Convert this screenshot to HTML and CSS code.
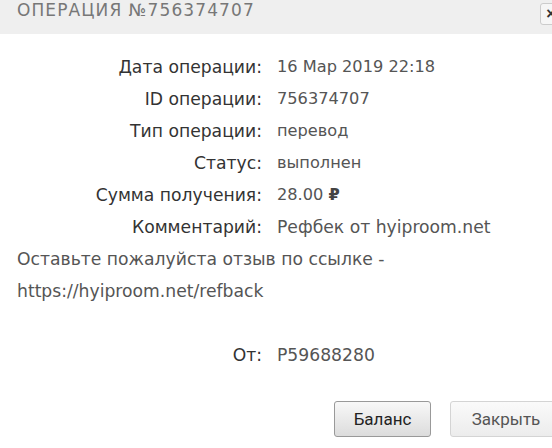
FILE: index.html
```html
<!DOCTYPE html>
<html lang="ru">
<head>
  <meta charset="UTF-8">
  <title>Операция №756374707</title>
  <link rel="stylesheet" href="styles.css">
</head>
<body>
  <div class="dialog">
    <div class="dialog-head">
      <span class="dialog-title">Операция №756374707</span>
      <button class="head-close">×</button>
    </div>

    <div class="dialog-body">
      <div class="info">
        <span class="label">Дата операции:</span>
        <span class="value">16 Мар 2019 22:18</span>
        <span class="label">ID операции:</span>
        <span class="value">756374707</span>
        <span class="label">Тип операции:</span>
        <span class="value">перевод</span>
        <span class="label">Статус:</span>
        <span class="value">выполнен</span>
        <span class="label">Сумма получения:</span>
        <span class="value">28.00 <b class="rub">₽</b></span>
        <span class="label">Комментарий:</span>
        <span class="value wide">Рефбек от hyiproom.net</span>
      </div>
      <p class="comment">Оставьте пожалуйста отзыв по ссылке - https://hyiproom.net/refback</p>
      <div class="info from">
        <span class="label">От:</span>
        <span class="value wide">P59688280</span>
      </div>
    </div>

    <div class="dialog-foot">
      <button class="btn btn-main">Баланс</button>
      <button class="btn btn-close">Закрыть</button>
    </div>
  </div>
</body>
</html>
```

FILE: styles.css
```css
body {
  margin: 0;
  overflow: hidden;
  background: #fff;
  font-family: 'DejaVu Sans', sans-serif;
}

.dialog {
  width: 562px;
}

.dialog-head {
  height: 34px;
  background: #efefef;
  display: flex;
  justify-content: space-between;
  align-items: flex-start;
  padding-left: 17px;
}

.dialog-title {
  text-transform: uppercase;
  font-size: 17px;
  letter-spacing: 1.1px;
  color: #777;
  line-height: 20px;
}

.head-close {
  margin: 3px 0 0;
  width: 22px;
  height: 22px;
  padding: 0;
  border: 1px solid #ccc;
  border-radius: 3px;
  background: #f6f6f6;
  color: #333;
  font-size: 16px;
  font-weight: bold;
  line-height: 18px;
}

.dialog-body {
  padding: 17px 17px 0;
}

.info {
  display: grid;
  grid-template-columns: 245px auto;
  column-gap: 15px;
  line-height: 32px;
}

.label {
  text-align: right;
  color: #333;
  font-size: 17.2px;
}

.value {
  color: #555;
  font-size: 16.2px;
}

.value.wide {
  font-size: 17.2px;
}

.rub {
  font-weight: bold;
  color: #444;
}

.comment {
  margin: 0;
  width: 400px;
  font-size: 17.2px;
  line-height: 32px;
  color: #555;
}

.from {
  margin-top: 32px;
}

.dialog-foot {
  display: flex;
  justify-content: flex-end;
  gap: 19px;
  padding: 30px 0 0;
}

.btn {
  height: 36px;
  padding: 0 18px;
  font-family: Roboto, sans-serif;
  font-size: 17px;
  border-radius: 3px;
  cursor: pointer;
}

.btn-main {
  width: 97px;
  color: #222;
  border: 1px solid #999;
  background: linear-gradient(#f8f8f8, #dcdcdc);
}

.btn-close {
  width: 112px;
  color: #555;
  border: 1px solid #d4d4d4;
  background: linear-gradient(#fafafa, #ececec);
}
```
